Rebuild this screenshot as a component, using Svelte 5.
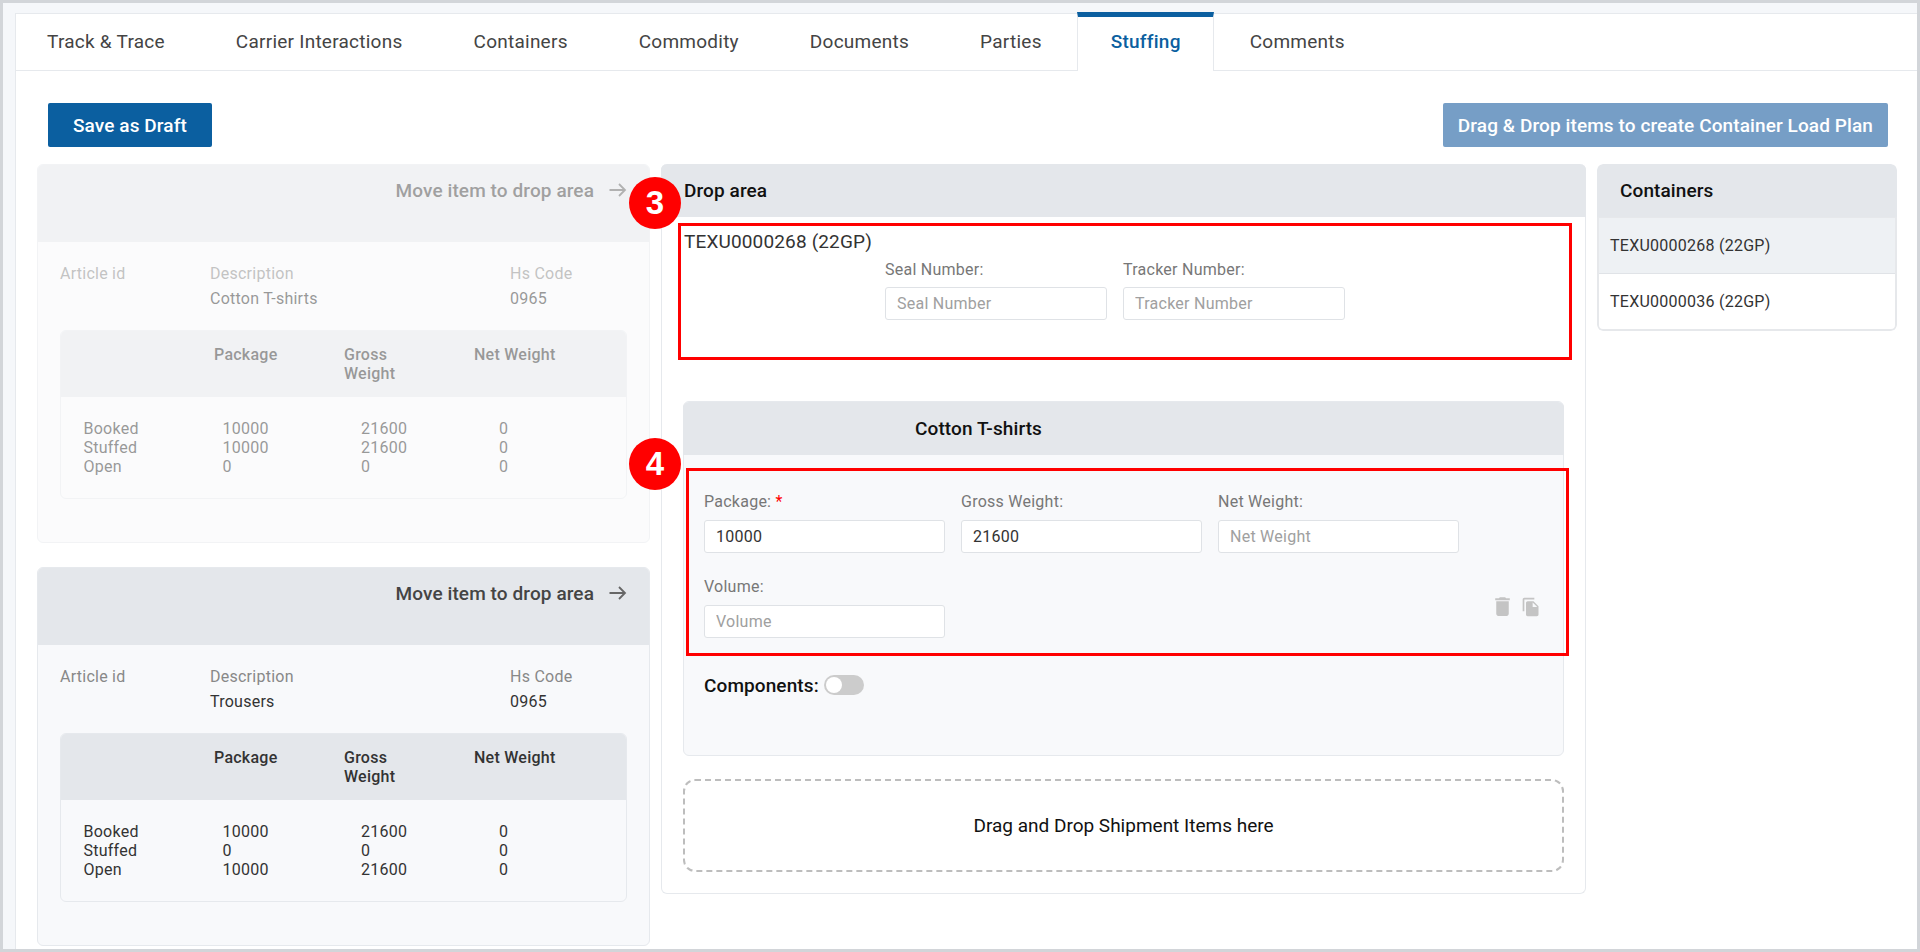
<script>
	const tabs = ['Track & Trace', 'Carrier Interactions', 'Containers', 'Commodity', 'Documents', 'Parties', 'Stuffing', 'Comments'];

	const items = [
		{
			name: 'Cotton T-shirts',
			faded: true,
			rows: [
				['Booked', '10000', '21600', '0'],
				['Stuffed', '10000', '21600', '0'],
				['Open', '0', '0', '0']
			]
		},
		{
			name: 'Trousers',
			faded: false,
			rows: [
				['Booked', '10000', '21600', '0'],
				['Stuffed', '0', '0', '0'],
				['Open', '10000', '21600', '0']
			]
		}
	];
</script>

<div class="frame">
	<div class="panel">
		<nav class="tabs">
			{#each tabs as tab}
				<div class={['tab', tab === 'Stuffing' && 'active']}>{tab}</div>
			{/each}
		</nav>

		<div class="actions">
			<button class="btn primary">Save as Draft</button>
			<button class="btn muted">Drag &amp; Drop items to create Container Load Plan</button>
		</div>

		<div class="columns">
			<div class="items">
				{#each items as item}
					<section class={['item', item.faded && 'faded']}>
						<header class="item-head">
							<span>Move item to drop area</span>
							<svg width="18" height="14" viewBox="0 0 18 14" fill="none" stroke="currentColor" stroke-width="1.8">
								<path d="M0.5 7h15.5M10 1l6 6-6 6" />
							</svg>
						</header>
						<div class="meta">
							<span class="label">Article id</span>
							<span class="label">Description</span>
							<span class="label">Hs Code</span>
							<span></span>
							<span class="value">{item.name}</span>
							<span class="value">0965</span>
						</div>
						<div class="qty">
							<div class="qty-head">
								<span>Package</span>
								<span class="narrow">Gross Weight</span>
								<span>Net Weight</span>
							</div>
							<div class="qty-body">
								{#each item.rows as row}
									{#each row as cell}
										<span>{cell}</span>
									{/each}
								{/each}
							</div>
						</div>
					</section>
				{/each}
			</div>

			<section class="drop">
				<header class="head">Drop area</header>
				<div class="drop-body">
					<div class="badge badge-three">3</div>
					<div class="redbox box-three"></div>
					<h3 class="container-name">TEXU0000268 (22GP)</h3>
					<div class="seal">
						<div class="field">
							<label for="seal">Seal Number:</label>
							<input id="seal" placeholder="Seal Number" />
						</div>
						<div class="field">
							<label for="tracker">Tracker Number:</label>
							<input id="tracker" placeholder="Tracker Number" />
						</div>
					</div>

					<div class="stuffed">
						<header class="head stuffed-head">Cotton T-shirts</header>
						<div class="stuffed-body">
							<div class="badge badge-four">4</div>
							<div class="redbox box-four"></div>
							<div class="form-row">
								<div class="field">
									<label for="package">Package: <em>*</em></label>
									<input id="package" value="10000" />
								</div>
								<div class="field">
									<label for="gross">Gross Weight:</label>
									<input id="gross" value="21600" />
								</div>
								<div class="field">
									<label for="net">Net Weight:</label>
									<input id="net" placeholder="Net Weight" />
								</div>
							</div>
							<div class="form-row second">
								<div class="field">
									<label for="volume">Volume:</label>
									<input id="volume" placeholder="Volume" />
								</div>
								<div class="row-icons">
									<svg width="25" height="25" viewBox="0 0 24 24" fill="currentColor">
										<path d="M6 19c0 1.1.9 2 2 2h8c1.1 0 2-.9 2-2V7H6v12zM19 4h-3.500l-1-1h-5l-1 1H5v2h14V4z" />
									</svg>
									<svg width="20" height="20" viewBox="0 0 24 24" fill="currentColor">
										<path d="M16 1H4c-1.100 0-2 .9-2 2v14h2V3h12V1zm-1 4l6 6v10c0 1.100-.9 2-2 2H7.990C6.890 23 6 22.100 6 21l.01-14c0-1.100.89-2 1.990-2h7zm-1 7h5.500L14 6.500V12z" />
									</svg>
								</div>
							</div>
							<div class="components">
								<span>Components:</span>
								<span class="toggle"><span class="knob"></span></span>
							</div>
						</div>
					</div>

					<div class="dropzone">Drag and Drop Shipment Items here</div>
				</div>
			</section>

			<aside class="side">
				<header class="head side-head">Containers</header>
				<ul class="side-list">
					<li class="selected">TEXU0000268 (22GP)</li>
					<li>TEXU0000036 (22GP)</li>
				</ul>
			</aside>
		</div>
	</div>
</div>

<style>
	:global(body) {
		margin: 0;
		font-family: Roboto, 'Liberation Sans', sans-serif;
	}

	.frame {
		box-sizing: border-box;
		height: 952px;
		overflow: hidden;
		border: 3px solid #d2d5d9;
		background: #f5f7fa;
		padding: 10px 0 0 12px;
	}

	.panel {
		height: 100%;
		background: #fff;
		border-top: 1px solid #e6e9ed;
		border-left: 1px solid #e6e9ed;
		box-sizing: border-box;
	}

	.tabs {
		display: flex;
		height: 56px;
		border-bottom: 1px solid #e6e9ed;
	}

	.tab {
		padding: 0 35.500px;
		font-size: 19px;
		letter-spacing: 0.25px;
		line-height: 55px;
		color: #444;
		white-space: nowrap;
		box-sizing: border-box;
	}

	.tab:first-child {
		padding-left: 31px;
	}

	.tab.active {
		margin: -2px 0 -1px;
		height: 59px;
		padding: 0 32.500px;
		border: 1px solid #e6e9ed;
		border-top: 5px solid #0b5fa0;
		border-bottom: 0;
		background: #fff;
		color: #0b5fa0;
		font-weight: 500;
		line-height: 50px;
	}

	.actions {
		display: flex;
		justify-content: space-between;
		padding: 32px 29px 0 32px;
	}

	.btn {
		height: 44px;
		border: 0;
		border-radius: 2px;
		color: #fff;
		font-family: inherit;
		font-size: 19px;
		letter-spacing: 0.1px;
		font-weight: 500;
		padding: 0 15px;
		white-space: nowrap;
	}

	.primary {
		background: #0b5fa0;
		padding: 0 25px;
	}

	.muted {
		background: #769ec6;
	}

	.columns {
		display: grid;
		grid-template-columns: 613px 925px 300px;
		column-gap: 11px;
		padding: 17px 0 0 21px;
		align-items: start;
	}

	.items {
		display: flex;
		flex-direction: column;
		gap: 24px;
	}

	.item {
		box-sizing: border-box;
		height: 379px;
		border: 1px solid #e6e9ed;
		border-radius: 6px;
		background: #f8f9fb;
		overflow: hidden;
	}

	.faded {
		opacity: 0.5;
	}

	.item-head {
		display: flex;
		justify-content: flex-end;
		align-items: flex-start;
		gap: 15px;
		height: 78px;
		box-sizing: border-box;
		margin-top: -1px;
		padding: 15px 22px 0 0;
		background: #e4e7eb;
		color: #444;
		font-size: 19px;
		letter-spacing: 0.1px;
		font-weight: 500;
		line-height: 24px;
	}

	.item-head svg {
		margin-top: 4px;
		color: #666;
	}

	.meta {
		display: grid;
		grid-template-columns: 150px 300px 1fr;
		row-gap: 6px;
		padding: 22px 22px 0;
		font-size: 16px;
		letter-spacing: 0.25px;
		line-height: 19px;
	}

	.label {
		color: #888;
	}

	.value {
		color: #333;
	}

	.qty {
		margin: 22px 22px 0 22px;
		height: 169px;
		box-sizing: border-box;
		border: 1px solid #e6e9ed;
		border-radius: 6px;
		overflow: hidden;
		font-size: 16px;
		letter-spacing: 0.25px;
		line-height: 19px;
		color: #333;
	}

	.qty-head {
		display: grid;
		grid-template-columns: 130px 130px 130px;
		height: 67px;
		box-sizing: border-box;
		margin: -1px 0 0;
		padding: 15px 0 0 153px;
		background: #e4e7eb;
		font-weight: 500;
	}

	.narrow {
		max-width: 70px;
	}

	.qty-body {
		display: grid;
		grid-template-columns: 139px 138.500px 138px 1fr;
		padding: 22px 0 0 22.500px;
	}

	.head {
		height: 53px;
		background: #e4e7eb;
		color: #111;
		font-size: 19px;
		letter-spacing: 0.1px;
		font-weight: 500;
		line-height: 54px;
		padding-left: 23px;
		box-sizing: border-box;
	}

	.drop {
		box-sizing: border-box;
		height: 730px;
		border: 1px solid #e6e9ed;
		border-top: 0;
		border-radius: 6px;
		background: #fff;
	}

	.drop .head:first-child {
		border-radius: 6px 6px 0 0;
		margin: 0 -1px;
	}

	.drop-body {
		position: relative;
		padding: 13px 21px 0 22px;
	}

	.container-name {
		margin: 0;
		font-size: 19px;
		letter-spacing: 0.15px;
		font-weight: 400;
		line-height: 24px;
		color: #333;
	}

	.seal {
		display: flex;
		gap: 16px;
		margin: 6px 0 0 201px;
	}

	.seal input {
		width: 222px;
	}

	.field {
		display: flex;
		flex-direction: column;
		gap: 8px;
		font-size: 16px;
		letter-spacing: 0.25px;
		line-height: 19px;
	}

	.stuffed-body .field {
		gap: 9px;
	}

	.field label {
		color: #777;
	}

	.field em {
		color: #f00;
		font-style: normal;
	}

	input {
		box-sizing: border-box;
		width: 241px;
		height: 33px;
		border: 1px solid #dfe2e6;
		border-radius: 3px;
		background: #fff;
		padding: 0 11px;
		color: #333;
		font-family: inherit;
		font-size: 16px;
		letter-spacing: 0.25px;
	}

	input::placeholder {
		color: #a0a0a0;
		opacity: 1;
	}

	.stuffed {
		margin: 81px 0 0 -1px;
		height: 355px;
		box-sizing: border-box;
		border: 1px solid #e6e9ed;
		border-radius: 6px;
		background: #f8f9fb;
	}

	.stuffed-head {
		margin: -1px -1px 0;
		padding-left: 232px;
		border-radius: 6px 6px 0 0;
	}

	.stuffed-body {
		position: relative;
		padding: 37px 22px 0 20px;
	}

	.form-row {
		display: flex;
		gap: 16px;
	}

	.second {
		margin-top: 24px;
		justify-content: space-between;
		align-items: center;
	}

	.row-icons {
		display: flex;
		align-items: center;
		gap: 6px;
		color: #c4c4c4;
		margin-top: -2px;
	}

	.components {
		display: flex;
		align-items: center;
		gap: 5px;
		margin-top: 37px;
		height: 20px;
		color: #111;
		font-size: 19px;
		letter-spacing: 0.1px;
		font-weight: 500;
	}

	.toggle {
		display: block;
		width: 40px;
		height: 20px;
		border-radius: 10px;
		background: #ccc;
		padding: 2px;
		box-sizing: border-box;
	}

	.knob {
		display: block;
		width: 16px;
		height: 16px;
		border-radius: 50%;
		background: #fff;
	}

	.dropzone {
		box-sizing: border-box;
		height: 93px;
		margin: 23px 0 0 -1px;
		border: 2px dashed #bdbdbd;
		border-radius: 12px;
		display: flex;
		align-items: center;
		justify-content: center;
		color: #111;
		font-size: 19px;
	}

	.side {
		border-radius: 6px;
		overflow: hidden;
	}

	.side-list {
		list-style: none;
		margin: 0;
		padding: 0;
		box-sizing: border-box;
		height: 114px;
		border: 2px solid #e6e8eb;
		border-top-width: 1px;
		border-radius: 0 0 6px 6px;
		font-size: 16px;
		letter-spacing: 0.25px;
		color: #333;
	}

	.side-list li {
		height: 56px;
		line-height: 56px;
		padding-left: 11px;
		box-sizing: border-box;
	}

	.side-list li.selected {
		background: #eef1f4;
		border-bottom: 1px solid #e0e3e7;
	}

	.side-head {
		border-radius: 6px 6px 0 0;
	}

	.redbox {
		position: absolute;
		box-sizing: border-box;
		border: 3px solid #f00;
		pointer-events: none;
	}

	.box-three {
		left: 16px;
		top: 6px;
		width: 894px;
		height: 137px;
	}

	.box-four {
		left: 2px;
		top: 13px;
		width: 883px;
		height: 188px;
	}

	.badge {
		position: absolute;
		z-index: 2;
		width: 52px;
		height: 52px;
		border-radius: 50%;
		background: #f00;
		color: #fff;
		font-family: 'Liberation Sans', Arial, sans-serif;
		font-size: 33px;
		font-weight: 700;
		line-height: 52px;
		text-align: center;
	}

	.badge-three {
		left: -33px;
		top: -40px;
	}

	.badge-four {
		left: -55px;
		top: -17px;
	}
</style>
